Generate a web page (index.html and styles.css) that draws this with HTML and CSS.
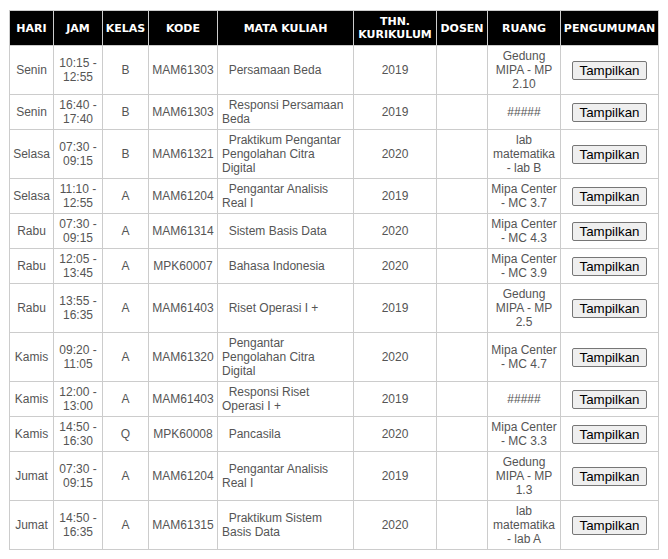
FILE: index.html
```html
<!DOCTYPE html>
<html>
<head>
<meta charset="utf-8">
<link rel="stylesheet" href="styles.css">
</head>
<body>
<table class="jadwal">
  <colgroup>
    <col class="c-hari"><col class="c-jam"><col class="c-kelas"><col class="c-kode"><col class="c-mk"><col class="c-thn"><col class="c-dosen"><col class="c-ruang"><col class="c-peng">
  </colgroup>
  <thead>
    <tr>
      <th>HARI</th><th>JAM</th><th>KELAS</th><th>KODE</th><th>MATA KULIAH</th><th>THN. KURIKULUM</th><th>DOSEN</th><th>RUANG</th><th>PENGUMUMAN</th>
    </tr>
  </thead>
  <tbody>
    <tr><td>Senin</td><td>10:15 - 12:55</td><td>B</td><td>MAM61303</td><td class="mk">&nbsp;&nbsp;Persamaan Beda</td><td>2019</td><td></td><td>Gedung MIPA - MP 2.10</td><td><button class="btn">Tampilkan</button></td></tr>
    <tr><td>Senin</td><td>16:40 - 17:40</td><td>B</td><td>MAM61303</td><td class="mk">&nbsp;&nbsp;Responsi Persamaan Beda</td><td>2019</td><td></td><td>#####</td><td><button class="btn">Tampilkan</button></td></tr>
    <tr><td>Selasa</td><td>07:30 - 09:15</td><td>B</td><td>MAM61321</td><td class="mk">&nbsp;&nbsp;Praktikum Pengantar Pengolahan Citra Digital</td><td>2020</td><td></td><td>lab matematika - lab B</td><td><button class="btn">Tampilkan</button></td></tr>
    <tr><td>Selasa</td><td>11:10 - 12:55</td><td>A</td><td>MAM61204</td><td class="mk">&nbsp;&nbsp;Pengantar Analisis Real I</td><td>2019</td><td></td><td>Mipa Center - MC 3.7</td><td><button class="btn">Tampilkan</button></td></tr>
    <tr><td>Rabu</td><td>07:30 - 09:15</td><td>A</td><td>MAM61314</td><td class="mk">&nbsp;&nbsp;Sistem Basis Data</td><td>2020</td><td></td><td>Mipa Center - MC 4.3</td><td><button class="btn">Tampilkan</button></td></tr>
    <tr><td>Rabu</td><td>12:05 - 13:45</td><td>A</td><td>MPK60007</td><td class="mk">&nbsp;&nbsp;Bahasa Indonesia</td><td>2020</td><td></td><td>Mipa Center - MC 3.9</td><td><button class="btn">Tampilkan</button></td></tr>
    <tr><td>Rabu</td><td>13:55 - 16:35</td><td>A</td><td>MAM61403</td><td class="mk">&nbsp;&nbsp;Riset Operasi I +</td><td>2019</td><td></td><td>Gedung MIPA - MP 2.5</td><td><button class="btn">Tampilkan</button></td></tr>
    <tr><td>Kamis</td><td>09:20 - 11:05</td><td>A</td><td>MAM61320</td><td class="mk">&nbsp;&nbsp;Pengantar Pengolahan Citra Digital</td><td>2020</td><td></td><td>Mipa Center - MC 4.7</td><td><button class="btn">Tampilkan</button></td></tr>
    <tr><td>Kamis</td><td>12:00 - 13:00</td><td>A</td><td>MAM61403</td><td class="mk">&nbsp;&nbsp;Responsi Riset Operasi I +</td><td>2019</td><td></td><td>#####</td><td><button class="btn">Tampilkan</button></td></tr>
    <tr><td>Kamis</td><td>14:50 - 16:30</td><td>Q</td><td>MPK60008</td><td class="mk">&nbsp;&nbsp;Pancasila</td><td>2020</td><td></td><td>Mipa Center - MC 3.3</td><td><button class="btn">Tampilkan</button></td></tr>
    <tr><td>Jumat</td><td>07:30 - 09:15</td><td>A</td><td>MAM61204</td><td class="mk">&nbsp;&nbsp;Pengantar Analisis Real I</td><td>2019</td><td></td><td>Gedung MIPA - MP 1.3</td><td><button class="btn">Tampilkan</button></td></tr>
    <tr><td>Jumat</td><td>14:50 - 16:35</td><td>A</td><td>MAM61315</td><td class="mk">&nbsp;&nbsp;Praktikum Sistem Basis Data</td><td>2020</td><td></td><td>lab matematika - lab A</td><td><button class="btn">Tampilkan</button></td></tr>
  </tbody>
</table>
</body>
</html>
```
FILE: styles.css
```css
html, body {
  background: #ffffff;
}
body {
  margin: 10px 9px;
  font-family: "Liberation Sans", Arial, sans-serif;
  font-size: 12px;
  color: #555555;
}
.jadwal {
  border-collapse: collapse;
  table-layout: fixed;
  width: 649px;
}
.c-hari { width: 44px; }
.c-jam { width: 49px; }
.c-kelas { width: 46px; }
.c-kode { width: 69px; }
.c-mk { width: 136px; }
.c-thn { width: 83px; }
.c-dosen { width: 51px; }
.c-ruang { width: 73px; }
.c-peng { width: 98px; }

.jadwal th {
  background: #000000;
  color: #ffffff;
  font-family: "DejaVu Sans", Verdana, sans-serif;
  font-weight: bold;
  font-size: 11px;
  padding: 4px 1px;
  border: 1px solid #cccccc;
  text-align: center;
  vertical-align: middle;
}
.jadwal td {
  border: 1px solid #cccccc;
  padding: 3px 2px;
  text-align: center;
  vertical-align: middle;
}
.jadwal td.mk {
  text-align: left;
  padding-left: 4px;
}
.btn {
  font-family: "Liberation Sans", Arial, sans-serif;
  font-size: 13.333px;
  color: #000000;
  background: #efefef;
  border: 1px solid #767676;
  border-radius: 2px;
  padding: 1px 6px;
  margin: 0;
}
```
